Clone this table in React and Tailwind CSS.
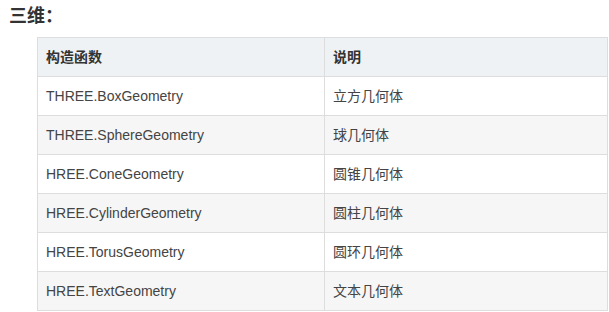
export default function App() {
  const rows = [
    ["THREE.BoxGeometry", "立方几何体"],
    ["THREE.SphereGeometry", "球几何体"],
    ["HREE.ConeGeometry", "圆锥几何体"],
    ["HREE.CylinderGeometry", "圆柱几何体"],
    ["HREE.TorusGeometry", "圆环几何体"],
    ["HREE.TextGeometry", "文本几何体"],
  ];
  return (
    <div
      className="w-[609px] h-[312px] bg-white overflow-hidden text-[#333]"
      style={{ fontFamily: '"Liberation Sans", "Noto Sans CJK SC", sans-serif' }}
    >
      <div className="pl-[9px] pt-[4px] h-[37px] text-[18px] leading-[24px] font-bold text-[#333]">三维：</div>
      <table className="ml-[37px] w-[571px] border-collapse text-[14px] table-fixed">
        <colgroup>
          <col className="w-[287px]" />
          <col />
        </colgroup>
        <thead>
          <tr className="bg-[#eff2f5] h-[39px]">
            <th className="border border-[#dddddd] text-left font-bold px-[8px] text-[#333]">构造函数</th>
            <th className="border border-[#dddddd] text-left font-bold px-[8px] text-[#333]">说明</th>
          </tr>
        </thead>
        <tbody className="text-[#444]">
          {rows.map((r, i) => (
            <tr key={i} className={`h-[39px] ${i % 2 === 1 ? "bg-[#f6f6f6]" : "bg-white"}`}>
              <td className="border border-[#dddddd] px-[8px]">{r[0]}</td>
              <td className="border border-[#dddddd] px-[8px]">{r[1]}</td>
            </tr>
          ))}
        </tbody>
      </table>
    </div>
  );
}
